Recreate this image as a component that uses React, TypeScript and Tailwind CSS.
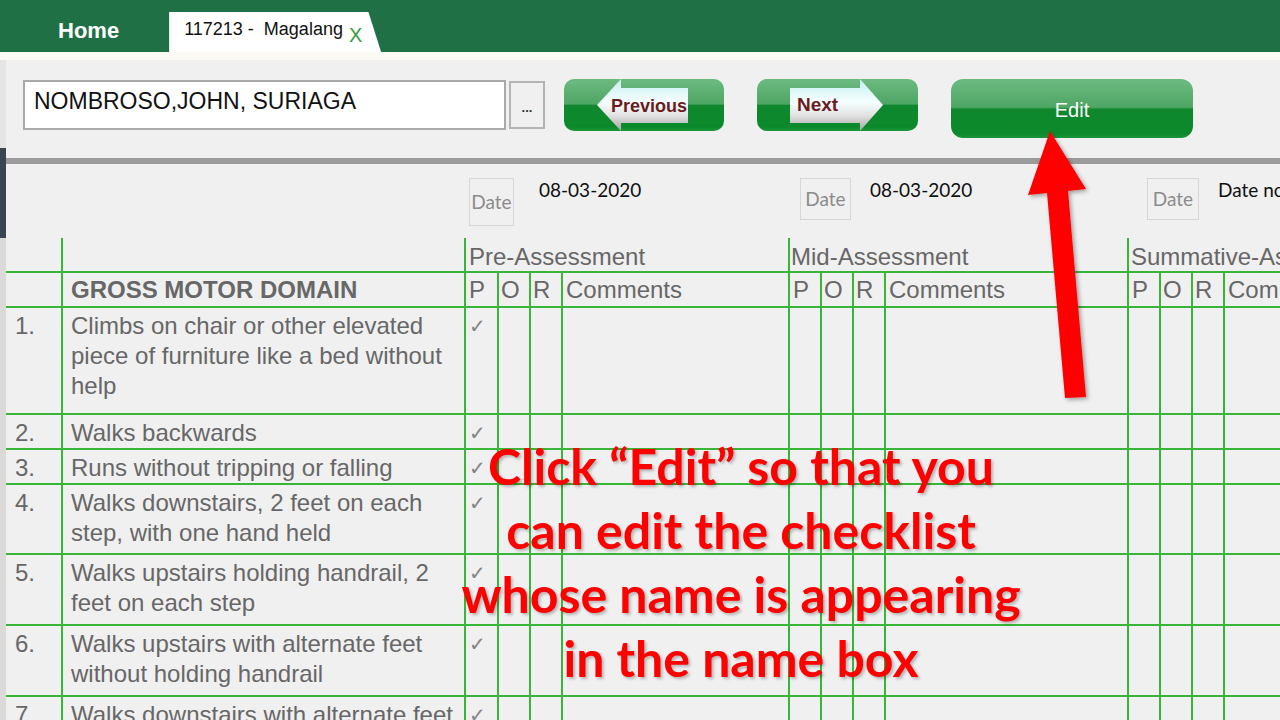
import React from 'react'

const G = 'border-[#38b638]'
const cols = 'grid grid-cols-[55px_403px_33px_32px_32px_227px_32px_32px_32px_243px_32px_32px_32px_1fr]'
const gloss = 'bg-[linear-gradient(to_bottom,#6dba81_0%,#4ea664_48%,#0f872d_51%,#0b8a2b_92%,#1c963b_100%)]'

const rows = [
  { n: '1.', lines: ['Climbs on chair or other elevated', 'piece of furniture like a bed without', 'help'], h: 'h-[107px]' },
  { n: '2.', lines: ['Walks backwards'], h: 'h-[35px]' },
  { n: '3.', lines: ['Runs without tripping or falling'], h: 'h-[35px]' },
  { n: '4.', lines: ['Walks downstairs, 2 feet on each', 'step, with one hand held'], h: 'h-[70px]' },
  { n: '5.', lines: ['Walks upstairs holding handrail, 2', 'feet on each step'], h: 'h-[71px]' },
  { n: '6.', lines: ['Walks upstairs with alternate feet', 'without holding handrail'], h: 'h-[71px]' },
  { n: '7.', lines: ['Walks downstairs with alternate feet'], h: 'h-[71px]' },
]

const ArrowFill = ({ id }: { id: string }) => (
  <linearGradient id={id} x1="0" y1="0" x2="0" y2="1">
    <stop offset="0" stopColor="#c6eef0" />
    <stop offset="0.45" stopColor="#f6ffff" />
    <stop offset="0.7" stopColor="#e2e2e2" />
    <stop offset="1" stopColor="#a4a4a4" />
  </linearGradient>
)

const DateGroup = ({ start, box, gap, w, h, text }: { start: string; box: string; gap: string; w: string; h: string; text: string }) => (
  <div className={`${start} col-span-4 flex items-start pt-[14px] whitespace-nowrap overflow-hidden font-['Lato',sans-serif]`}>
    <div className={`${box} ${w} ${h} shrink-0 border border-[#d6d6d6] flex items-center justify-center text-[19px] text-[#8b8b8b]`}>Date</div>
    <div className={`${gap} text-[19px] leading-[24px] text-[#111]`}>{text}</div>
  </div>
)

const App = () => {
  return (
    <div className="relative w-[1280px] h-[720px] overflow-hidden bg-[#f0f0f0] font-['Liberation_Sans',Arial,sans-serif]">
      {/* top tabs */}
      <div className="h-[52px] bg-[#1f7145] flex items-end">
        <div className="h-[52px] pl-[58px] pt-[8px] flex items-center text-white font-bold text-[22px]">Home</div>
        <div className="ml-[50px] h-[40px] w-[212px] bg-white [clip-path:polygon(0_0,94%_0,100%_100%,0_100%)] flex items-start pl-[15px]">
          <span className="mt-[6px] text-[18px] leading-[22px] text-[#111] whitespace-pre">117213 -  Magalang</span>
          <span className="ml-[6px] mt-[12px] text-[20px] leading-[22px] text-[#3a9c3f]">X</span>
        </div>
      </div>
      <div className="h-[8px] bg-[#fbfaf5]" />

      <div className="flex h-[660px]">
        <div className="w-[6px] shrink-0 flex flex-col">
          <div className="h-[88px] bg-[#e6e4e4]" />
          <div className="h-[90px] bg-[#3b4550]" />
          <div className="flex-1 bg-[#dcd9d9]" />
        </div>

        <div className="flex-1 min-w-0">
          {/* toolbar */}
          <div className="h-[98px] flex items-start pt-[19px] pl-[17px]">
            <div className="mt-[1px] h-[50px] w-[483px] shrink-0 bg-white border-2 border-[#a9a9a9] pl-[9px] pt-[5px] text-[23px] leading-[28px] text-[#111]">
              NOMBROSO,JOHN, SURIAGA
            </div>
            <div className="ml-[3px] mt-[2px] h-[48px] w-[36px] shrink-0 border-2 border-[#b4b4b4] bg-[#f0f0f0] flex items-center justify-center pt-[6px] text-[13px] font-bold text-[#333]">
              ...
            </div>

            <div className={`relative ml-[19px] h-[52px] w-[160px] shrink-0 rounded-[10px] overflow-hidden ${gloss}`}>
              <svg className="absolute left-0 top-0" width="160" height="52">
                <defs><ArrowFill id="pf" /></defs>
                <polygon points="33,26 57,0 57,9 124,9 124,44 57,44 57,52" fill="url(#pf)" />
              </svg>
              <span className="absolute left-[47px] top-[16px] text-[18px] leading-[22px] font-bold text-[#6a1c1f]">Previous</span>
            </div>

            <div className={`relative ml-[33px] h-[52px] w-[161px] shrink-0 rounded-[10px] overflow-hidden ${gloss}`}>
              <svg className="absolute left-0 top-0" width="161" height="52">
                <defs><ArrowFill id="nf" /></defs>
                <polygon points="33,9 103,9 103,0 126,26 103,52 103,44 33,44" fill="url(#nf)" />
              </svg>
              <span className="absolute left-[40px] top-[15px] text-[19px] leading-[22px] font-bold text-[#6a1c1f]">Next</span>
            </div>

            <div className={`ml-[33px] h-[59px] w-[242px] shrink-0 rounded-[12px] flex items-center justify-center pt-[3px] text-[20px] text-white ${gloss}`}>
              Edit
            </div>
          </div>

          <div className="h-[6px] bg-[#9b9b9b]" />

          {/* checklist */}
          <div className="text-[24px] text-[#676767]">
            <div className={`${cols} h-[74px]`}>
              <DateGroup start="col-start-3" box="ml-[5px]" gap="ml-[25px]" w="w-[45px]" h="h-[48px]" text="08-03-2020" />
              <DateGroup start="col-start-7" box="ml-[12px]" gap="ml-[19px]" w="w-[51px]" h="h-[42px]" text="08-03-2020" />
              <DateGroup start="col-start-11" box="ml-[20px]" gap="ml-[19px]" w="w-[52px]" h="h-[42px]" text="Date not set" />
            </div>

            <div className={`${cols} h-[33px] leading-[33px] whitespace-nowrap`}>
              <div />
              <div className={`border-l-2 ${G}`} />
              <div className={`col-span-4 border-l-2 ${G} pl-[3px] pt-[2px]`}>Pre-Assessment</div>
              <div className={`col-span-4 border-l-2 ${G} pl-[1px] pt-[2px]`}>Mid-Assessment</div>
              <div className={`col-span-4 border-l-2 ${G} pl-[2px] pt-[2px]`}>Summative-Assessment</div>
            </div>

            <div className={`${cols} h-[35px] border-t-2 ${G} leading-[33px] whitespace-nowrap`}>
              <div />
              <div className={`border-l-2 ${G} pl-[8px] font-bold`}>GROSS MOTOR DOMAIN</div>
              {[0, 1, 2].map((g) => (
                <React.Fragment key={g}>
                  <div className={`border-l-2 ${G} pl-[3px]`}>P</div>
                  <div className={`border-l-2 ${G} pl-[2px]`}>O</div>
                  <div className={`border-l-2 ${G} pl-[2px]`}>R</div>
                  <div className={`border-l-2 ${G} pl-[3px]`}>Comments</div>
                </React.Fragment>
              ))}
            </div>

            {rows.map((r) => (
              <div key={r.n} className={`${cols} ${r.h} border-t-2 ${G} leading-[30px]`}>
                <div className="pl-[9px] pt-[3px]">{r.n}</div>
                <div className={`border-l-2 ${G} pl-[8px] pt-[3px] whitespace-nowrap`}>
                  {r.lines.map((l) => (
                    <div key={l}>{l}</div>
                  ))}
                </div>
                <div className={`border-l-2 ${G} pl-[3px] pt-[3px] text-[20px] text-[#858585]`}>✓</div>
                {Array.from({ length: 11 }).map((_, i) => (
                  <div key={i} className={`border-l-2 ${G}`} />
                ))}
              </div>
            ))}
          </div>
        </div>
      </div>

      {/* annotation */}
      <svg className="absolute left-0 top-0 pointer-events-none" width="1280" height="720">
        <defs>
          <filter id="sh" x="-20%" y="-20%" width="140%" height="140%">
            <feDropShadow dx="2" dy="2" stdDeviation="2" floodOpacity="0.35" />
          </filter>
        </defs>
        <polygon points="1050,131 1086,189 1068,191 1086,397 1065,398 1047,193 1028,195" fill="#ff0000" filter="url(#sh)" />
      </svg>
      <div className="absolute left-[441px] top-[434px] w-[600px] text-center font-['Lato',sans-serif] font-bold text-[50px] leading-[64px] text-[#ff0000] whitespace-nowrap [text-shadow:2px_2px_3px_rgba(0,0,0,0.25)] pointer-events-none">
        <div>Click “Edit” so that you</div>
        <div>can edit the checklist</div>
        <div>whose name is appearing</div>
        <div>in the name box</div>
      </div>
    </div>
  )
}

export default App
